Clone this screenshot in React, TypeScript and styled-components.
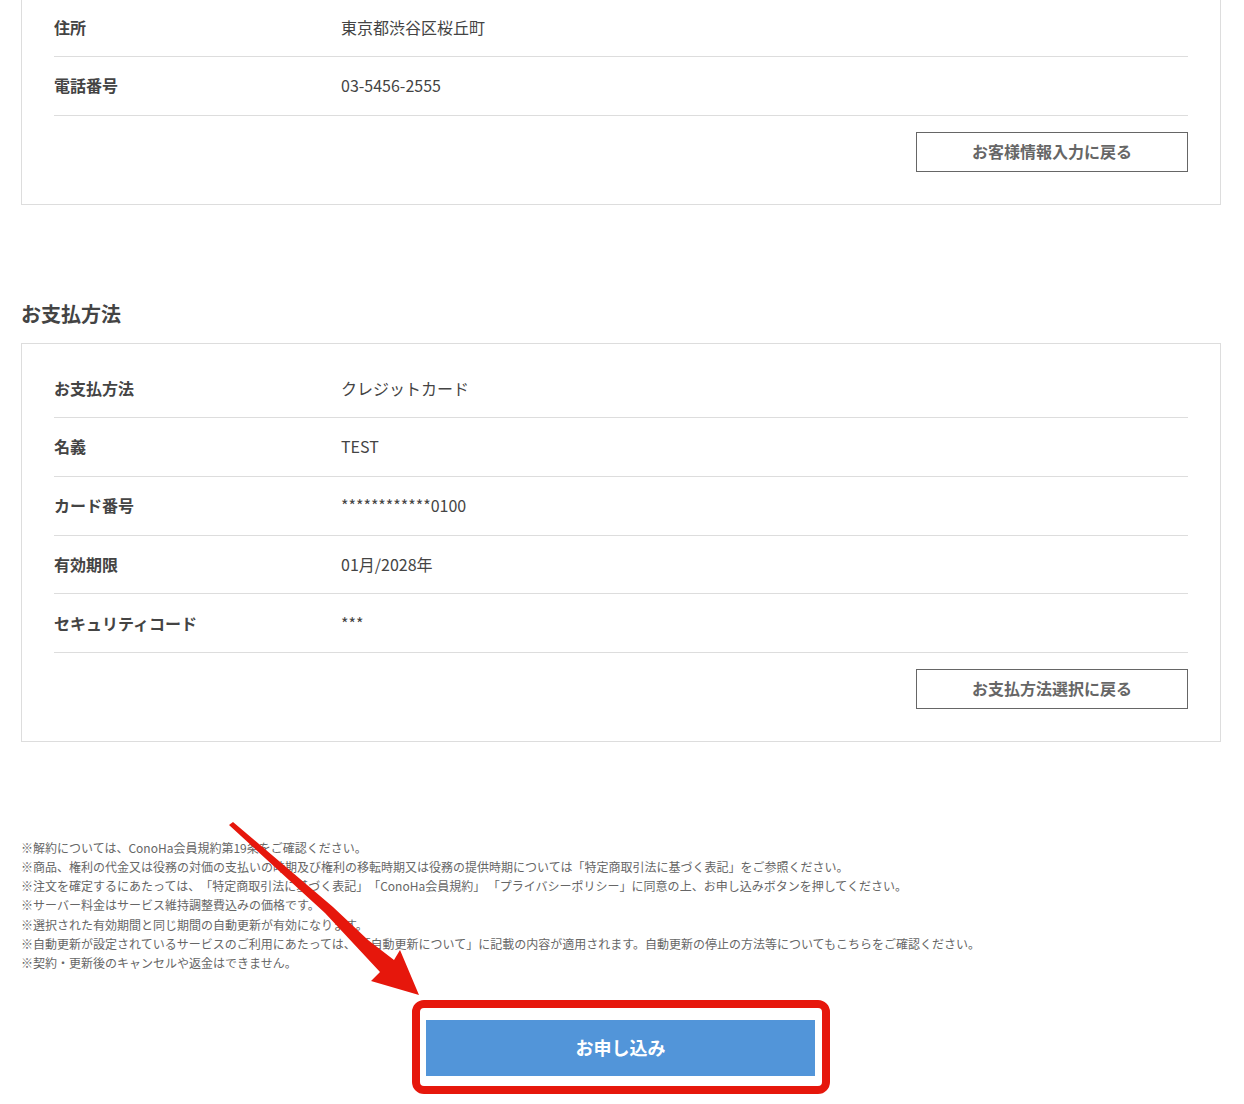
import React from "react";
import styled, { createGlobalStyle } from "styled-components";

const GlobalStyle = createGlobalStyle`
  html, body {
    margin: 0;
    padding: 0;
    background: #fff;
  }
  body {
    font-family: "Noto Sans CJK JP", "Noto Sans", sans-serif;
    color: #444;
    overflow: hidden;
    text-spacing-trim: space-all;
  }
`;

const Page = styled.div`
  position: relative;
  width: 1244px;
  height: 1104px;
  overflow: hidden;
  padding-left: 21px;
  box-sizing: border-box;
`;

const Panel = styled.section<{ $cut?: boolean }>`
  width: 1200px;
  box-sizing: border-box;
  border: 1px solid #ddd;
  padding: 15px 32px 32px;
  margin-top: ${(p) => (p.$cut ? "-18px" : "0")};
`;

const Heading = styled.h2`
  margin: 91.6px 0 11px;
  font-size: 20px;
  line-height: 36px;
  font-weight: 700;
  color: #444;
`;

const Row = styled.div`
  display: flex;
  padding: 14.5px 0;
  border-bottom: 1px solid #ddd;
  font-size: 16px;
  line-height: 28.8px;
`;

const Label = styled.div`
  width: 287px;
  flex: none;
  font-weight: 700;
`;

const Value = styled.div`
  font-weight: 400;
`;

const BackRow = styled.div`
  display: flex;
  justify-content: flex-end;
  margin-top: 16px;
`;

const BackButton = styled.button`
  width: 272px;
  height: 40px;
  box-sizing: border-box;
  background: #fff;
  border: 1px solid #666;
  border-radius: 0;
  padding: 0 0 2px;
  font-family: inherit;
  font-size: 16px;
  font-weight: 700;
  color: #666;
`;

const Notes = styled.div`
  margin-top: 95.6px;
  font-size: 12px;
  line-height: 19.2px;
  color: #666;
`;

const SubmitRow = styled.div`
  width: 1199px;
  display: flex;
  justify-content: center;
  margin-top: 47.6px;
`;

const SubmitButton = styled.button`
  position: relative;
  width: 389px;
  height: 56px;
  background: #5295d9;
  border: 0;
  border-radius: 0;
  padding: 0 0 2px;
  font-family: inherit;
  font-size: 18px;
  font-weight: 700;
  color: #fff;
`;

const Highlight = styled.span`
  position: absolute;
  top: -20px;
  left: -14px;
  right: -15px;
  bottom: -18px;
  border: 8px solid #e6170c;
  border-radius: 12px;
`;

const Arrow = styled.svg`
  position: absolute;
  left: 0;
  top: 0;
  pointer-events: none;
`;

type Item = { label: string; value: string };

const contact: Item[] = [
  { label: "住所", value: "東京都渋谷区桜丘町" },
  { label: "電話番号", value: "03-5456-2555" },
];

const payment: Item[] = [
  { label: "お支払方法", value: "クレジットカード" },
  { label: "名義", value: "TEST" },
  { label: "カード番号", value: "************0100" },
  { label: "有効期限", value: "01月/2028年" },
  { label: "セキュリティコード", value: "***" },
];

const notes = [
  "※解約については、ConoHa会員規約第19条をご確認ください。",
  "※商品、権利の代金又は役務の対価の支払いの時期及び権利の移転時期又は役務の提供時期については「特定商取引法に基づく表記」をご参照ください。",
  "※注文を確定するにあたっては、「特定商取引法に基づく表記」「ConoHa会員規約」 「プライバシーポリシー」に同意の上、お申し込みボタンを押してください。",
  "※サーバー料金はサービス維持調整費込みの価格です。",
  "※選択された有効期間と同じ期間の自動更新が有効になります。",
  "※自動更新が設定されているサービスのご利用にあたっては、 「自動更新について」に記載の内容が適用されます。自動更新の停止の方法等についてもこちらをご確認ください。",
  "※契約・更新後のキャンセルや返金はできません。",
];

const Rows: React.FC<{ items: Item[] }> = ({ items }) => (
  <>
    {items.map((item) => (
      <Row key={item.label}>
        <Label>{item.label}</Label>
        <Value>{item.value}</Value>
      </Row>
    ))}
  </>
);

export default function App() {
  return (
    <Page>
      <GlobalStyle />
      <Panel $cut>
        <Rows items={contact} />
        <BackRow>
          <BackButton>お客様情報入力に戻る</BackButton>
        </BackRow>
      </Panel>

      <Heading>お支払方法</Heading>
      <Panel>
        <Rows items={payment} />
        <BackRow>
          <BackButton>お支払方法選択に戻る</BackButton>
        </BackRow>
      </Panel>

      <Notes>
        {notes.map((note) => (
          <div key={note}>{note}</div>
        ))}
      </Notes>

      <SubmitRow>
        <SubmitButton>
          <Highlight />
          お申し込み
        </SubmitButton>
      </SubmitRow>

      <Arrow width="1244" height="1104" viewBox="0 0 1244 1104">
        <polygon
          points="233,822 333,907 368,940 394,960 400,950 419,995 371,981 380,972 325,913 229,825"
          fill="#e6170c"
        />
      </Arrow>
    </Page>
  );
}
